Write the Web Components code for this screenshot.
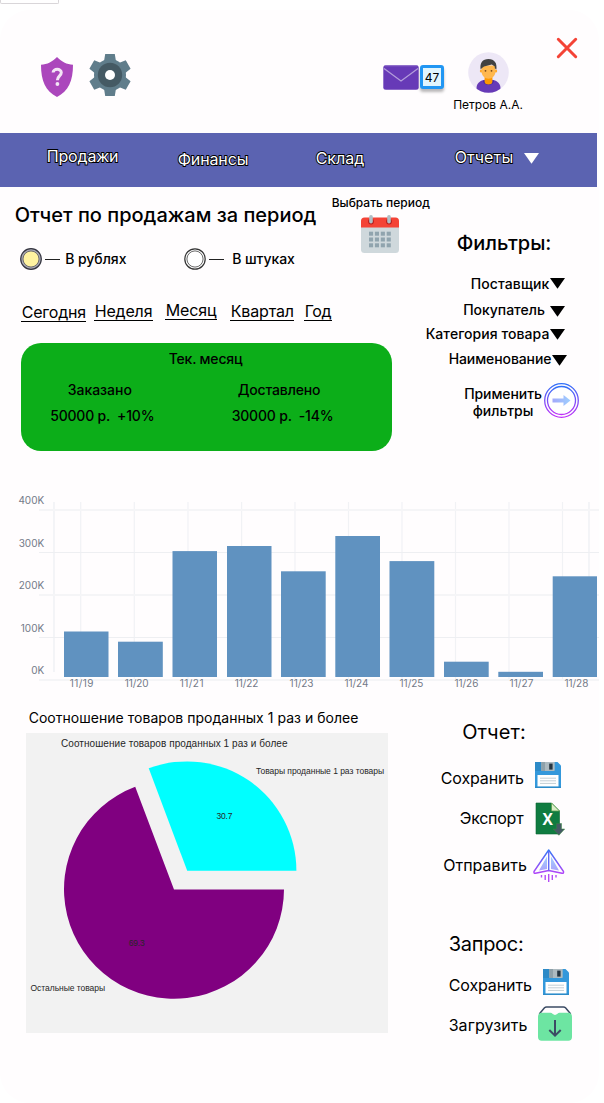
<!DOCTYPE html>
<html lang="ru">
<head>
<meta charset="utf-8">
<title>Отчет по продажам</title>
<style>
html,body{margin:0;padding:0;background:#fff;}
body{font-family:Inter,"Liberation Sans",sans-serif;color:#000;width:604px;height:1103px;overflow:hidden}
</style>
</head>
<body>
<report-app></report-app>
<script>
const define=(name,css,html)=>customElements.define(name,class extends HTMLElement{
  connectedCallback(){
    if(this.shadowRoot)return;
    const t=document.createElement('template');
    t.innerHTML=`<style>${css}</style>${html}`;
    this.attachShadow({mode:'open'}).appendChild(t.content.cloneNode(true));
  }
});

/* Single-line label, tracked so that it fills the width it is given */
customElements.define('ui-text',class extends HTMLElement{
  connectedCallback(){
    if(this.shadowRoot)return;
    const a=(k,d)=>this.getAttribute(k)||d;
    this.attachShadow({mode:'open'}).innerHTML=`<style>
      :host{display:block;flex:none;white-space:pre;box-sizing:content-box;
        font-size:${a('size',14)}px;font-weight:${a('weight',500)};line-height:${a('lh',20)}px;height:${a('lh',20)}px;
        margin-left:${a('x',0)}px;margin-top:${a('y',0)}px;padding-left:.7px;width:${a('w',50)-.7}px}
      :host([underline]){border-bottom:1px solid #000}
      :host([outlined]){color:#fff;-webkit-text-stroke:1.8px #000;paint-order:stroke fill}
    </style><span><slot></slot></span>`;
    const s=this.shadowRoot.querySelector('span');
    const n=this.textContent.length,w=s.getBoundingClientRect().width;
    s.style.letterSpacing=((a('w',50)-1.3-w)/n).toFixed(3)+'px';
  }
});

const floppy=`<path d="M0 0h22.5L26 3.5V26H0z" fill="#3498db"/><path d="M0 0h6v9H0z" fill="#2980b9" opacity=".6"/><path d="M6.3 0h13.4v8.2q0 .8-.8.8H7.1q-.8 0-.8-.8z" fill="#adbac0"/><path d="M6.3 0H10v9H7.1q-.8 0-.8-.8z" fill="#8fa1aa"/><rect x="14.2" y="1.6" width="3.4" height="6" fill="#263541"/><path d="M2.5 13h21v11.500h-21z" fill="#fff"/><path d="M5 16.2h16M5 18.8h16M5 21.4h16" stroke="#c3ced4" stroke-width="1"/><path d="M0 25.3h26" stroke="#2980b9" stroke-width="1.2" opacity=".6"/>`;
const tooth='M16.200 0h9.600l1.300 8H14.900zM16.200 42h9.600l1.300-8H14.900z';
const ICONS={
  shield:[32,40,`<path d="M16 0C12 4.500 6 7.500 0 7.800C0 24 4.500 34 16 40C27.500 34 32 24 32 7.800C26 7.500 20 4.500 16 0z" fill="#ab47bc"/><path d="M12.100 15.600C12.100 11.300 20.300 11.300 20.300 15.500C20.300 19 16.400 18.800 16.400 23.300" fill="none" stroke="#f3e5f5" stroke-width="3"/><circle cx="16.400" cy="27" r="1.900" fill="#f3e5f5"/>`],
  gear:[42,42,`<g fill="#607d8b"><circle cx="21" cy="21" r="16"/><path d="${tooth}"/><path d="${tooth}" transform="rotate(60 21 21)"/><path d="${tooth}" transform="rotate(120 21 21)"/></g><circle cx="21" cy="21" r="12.200" fill="#455a64"/><circle cx="21" cy="21" r="5" fill="#fff"/>`],
  mail:[36,25,`<rect x=".3" y=".3" width="35.400" height="24.400" rx="2.500" fill="#673ab7"/><path d="M1 3.500L18 16L35 3.500" fill="none" stroke="#b39ddb" stroke-width="1.300"/><path d="M1.500 .800h33" stroke="#9575cd" stroke-width=".8"/>`],
  avatar:[41,41,`<defs><clipPath id="c"><circle cx="20.500" cy="20.500" r="20.300"/></clipPath></defs><circle cx="20.500" cy="20.500" r="20.300" fill="#ede7f6"/><g clip-path="url(#c)"><path d="M8.500 42V36C8.500 30 14 27.500 20.500 27.500S32.500 30 32.500 36v6z" fill="#673ab7"/><path d="M15 28.500C15.500 34.500 25.500 34.500 26 28.500z" fill="#4527a0"/><path d="M16.600 24h7.800v5.500a3.900 3 0 0 1-7.800 0z" fill="#ff9800"/></g><circle cx="13.300" cy="19" r="1.500" fill="#ffa726"/><circle cx="27.700" cy="19" r="1.500" fill="#ffa726"/><path d="M13.600 13.500h13.800V19.500C27.400 29 13.600 29 13.600 19.500z" fill="#ffb74d"/><path d="M12.600 17.500C11.700 10.500 14.500 7.200 20.500 7C26.500 7.200 29.300 11 28.400 17.500L26.800 16.300V14.500L23.800 12.500L16 14.500L14 16z" fill="#424242"/><circle cx="17.500" cy="18.800" r=".9" fill="#784719"/><circle cx="23.500" cy="18.800" r=".9" fill="#784719"/>`],
  close:[20,20,`<path d="M1.300 1.300L18.700 18.700M18.700 1.300L1.300 18.700" stroke="#f44336" stroke-width="3" stroke-linecap="round"/>`],
  calendar:[38,38,`<path d="M0 10h38v24.500a3.500 3.500 0 0 1-3.500 3.500H3.500A3.500 3.500 0 0 1 0 34.500z" fill="#cfd8dc"/><path d="M0 12.500V6a3.500 3.500 0 0 1 3.500-3.500h31A3.500 3.500 0 0 1 38 6v6.500z" fill="#f44336"/><circle cx="10" cy="6.500" r="2.900" fill="#b71c1c"/><circle cx="28" cy="6.500" r="2.900" fill="#b71c1c"/><rect x="8.200" y="0" width="3.600" height="8.500" rx="1.800" fill="#b0bec5"/><rect x="26.200" y="0" width="3.600" height="8.500" rx="1.800" fill="#b0bec5"/><g fill="#90a4ae">${[16.7,22.5,28.3].map(y=>[8,13.9,19.8,25.7].map(x=>`<rect x="${x}" y="${y}" width="4.100" height="4"/>`).join('')).join('')}</g>`],
  down:[15,11,`<path d="M0 0h15L7.500 10.800z" fill="currentColor"/>`],
  on:[22,22,`<circle cx="11" cy="11" r="9.200" fill="#fff3a0" stroke="#a9a9b4" stroke-width="2.400"/><circle cx="11" cy="11" r="10.300" fill="none" stroke="#34343f" stroke-width="1.200"/><circle cx="11" cy="11" r="8" fill="none" stroke="#55555c" stroke-width=".8"/>`],
  off:[22,22,`<circle cx="11" cy="11" r="10.200" fill="#fff" stroke="#333" stroke-width="1.200"/><circle cx="11" cy="11" r="8.100" fill="none" stroke="#555" stroke-width=".9"/>`],
  apply:[35,35,`<defs><linearGradient id="g" x1="0" y1="0" x2="0" y2="1"><stop stop-color="#3070f8"/><stop offset="1" stop-color="#c030f8"/></linearGradient><linearGradient id="h"><stop stop-color="#a3a9fa"/><stop offset="1" stop-color="#9fd0ff"/></linearGradient></defs><circle cx="17.500" cy="17.500" r="16.800" fill="none" stroke="url(#g)" stroke-width="1.300"/><circle cx="17.500" cy="17.500" r="14" fill="#fff" stroke="url(#g)" stroke-width="1.300"/><path d="M8.500 15.500H19.500V12L26.500 17.500L19.500 23V19.500H8.500z" fill="url(#h)"/>`],
  save:[26,26,floppy],
  excel:[29,33,`<path d="M0 0h15.500L23.500 8V31H0z" fill="#107c41" stroke="#0b6633" stroke-width=".6"/><path d="M15.500 0L23.500 8h-8z" fill="#dcedc8" stroke="#5a9e4a" stroke-width=".8"/><text x="11.700" y="21.700" text-anchor="middle" font-family="Open Sans" font-weight="700" font-size="15.500" fill="#fff">X</text><path d="M20.300 20.500h5.200v5.500h3.200L22.900 32.300L17 26h3.300z" fill="#455a64" stroke="#37863c" stroke-width=".5"/>`],
  send:[32,33,`<defs><linearGradient id="g" x1="0" y1="0" x2="0" y2="1"><stop stop-color="#3478f6"/><stop offset="1" stop-color="#b044f8"/></linearGradient><linearGradient id="h" x1="0" y1="0" x2="0" y2="1"><stop stop-color="#9fd0ff"/><stop offset="1" stop-color="#aaa4fb"/></linearGradient></defs><path d="M14 7.500V20L6 21.500zM18 7.500L26 21.500L18 20z" fill="url(#h)"/><path d="M15.700 1L1 22.500Q.5 24.500 2.500 24.300L15.700 21.500L29 24.300Q31 24.500 30.500 22.500z" fill="none" stroke="url(#g)" stroke-width="1.400" stroke-linejoin="round"/><path d="M15.700 2V21.500" stroke="#5f6af7" stroke-width="1.400"/><path d="M8.500 26v2.500M12.200 26v5M15.700 25v8M19.300 26v5M23 26v2.500" stroke="#b44cf6" stroke-width="1.400"/>`],
  load:[34,35,`<path d="M1.300 8L6.500 1.700Q7.300 .9 8.500 .9h17q1.200 0 2 .8L32.700 8" fill="none" stroke="#3c4b64" stroke-width="1.500"/><path d="M0 11Q0 6.800 4 6.800h8.500q1.200 0 2 1q2.500 2.200 5 0q.8-1 2-1H30q4 0 4 4.200V31q0 3.700-3.700 3.700H3.700Q0 34.700 0 31z" fill="#6de5a2"/><path d="M17 14V29.500M11.300 24L17 29.700L22.700 24" fill="none" stroke="#3c4b64" stroke-width="2"/>`]
};
customElements.define('ui-icon',class extends HTMLElement{
  connectedCallback(){
    if(this.shadowRoot)return;
    const [w,h,body]=ICONS[this.getAttribute('name')];
    this.attachShadow({mode:'open'}).innerHTML=`<style>:host{display:block;flex:none;width:${w}px;height:${h}px;margin-left:${this.getAttribute('x')||0}px;margin-top:${this.getAttribute('y')||0}px}svg{display:block;overflow:visible}</style><svg width="${w}" height="${h}" viewBox="0 0 ${w} ${h}">${body}</svg>`;
  }
});

define('app-header',`
  :host{display:flex;align-items:flex-start;height:123px}
  .badge{box-sizing:border-box;width:24px;height:24px;margin:55px 0 0 1px;border:3px solid #2196f3;border-radius:3px;background:#e1f5fe;box-shadow:0 3px 3px rgba(0,0,0,.28);display:flex;justify-content:center;align-items:center}
  .user{width:72px;margin:42px 0 0 8px;display:flex;flex-direction:column}`,
  `<ui-icon name="shield" x="41" y="47"></ui-icon>
   <ui-icon name="gear" x="16" y="44"></ui-icon>
   <ui-icon name="mail" x="252" y="54.500"></ui-icon>
   <div class="badge"><ui-text size="12" weight="400" w="16" lh="17">47</ui-text></div>
   <div class="user"><ui-icon name="avatar" x="15.500"></ui-icon><ui-text size="12" weight="400" w="71" x=".5" y="2">Петров А.А.</ui-text></div>
   <ui-icon name="close" x="32.500" y="28"></ui-icon>`);

define('app-nav',`
  :host{display:flex;align-items:flex-start;width:597px;height:54px;background:#5b63b1;color:#fff}`,
  `<ui-text outlined size="16" weight="400" w="73" x="46" y="13">Продажи</ui-text>
   <ui-text outlined size="16" weight="400" w="72" x="58" y="16">Финансы</ui-text>
   <ui-text outlined size="16" weight="400" w="50" x="66" y="15">Склад</ui-text>
   <ui-text outlined size="16" weight="400" w="60" x="89" y="14">Отчеты</ui-text>
   <ui-icon name="down" x="10" y="19.500"></ui-icon>`);

define('report-period',`
  :host{display:block;width:425px}
  .row{display:flex;align-items:flex-start}
  .title{height:61px;width:436px}
  .date{display:flex;flex-direction:column;margin-left:14px}
  .units{height:52px}
  .dash{width:15px;height:1px;background:#222;margin:11px 0 0 3px}
  .periods{height:43px}`,
  `<div class="row title"><ui-text size="20" w="303" x="14" y="18">Отчет по продажам за период</ui-text>
     <div class="date"><ui-text size="12" w="99.500" y="6">Выбрать период</ui-text><ui-icon name="calendar" x="30" y="2"></ui-icon></div></div>
   <div class="row units"><ui-icon name="on" x="20"></ui-icon><span class="dash"></span><ui-text w="62.500" x="4.500" y="1">В рублях</ui-text>
     <ui-icon name="off" x="57"></ui-icon><span class="dash"></span><ui-text w="64" x="7.500" y="1">В штуках</ui-text></div>
   <div class="row periods">
     <ui-text underline size="16" weight="400" lh="18" w="65.500" x="21" y="3">Сегодня</ui-text>
     <ui-text underline size="16" weight="400" lh="18" w="59" x="7.500" y="2">Неделя</ui-text>
     <ui-text underline size="16" weight="400" lh="18" w="52" x="12" y="1">Месяц</ui-text>
     <ui-text underline size="16" weight="400" lh="18" w="64.500" x="13" y="2">Квартал</ui-text>
     <ui-text underline size="16" weight="400" lh="18" w="28" x="9.500" y="2">Год</ui-text></div>
   <summary-card></summary-card>`);

define('summary-card',`
  :host{display:block;width:371px;height:108px;margin-left:21px;border-radius:20px;background:#0cae19}
  .row{display:flex;align-items:flex-start}`,
  `<div class="row"><ui-text w="75" x="147" y="6">Тек. месяц</ui-text></div>
   <div class="row"><ui-text w="65.500" x="46" y="11">Заказано</ui-text><ui-text w="84" x="104.500" y="11">Доставлено</ui-text></div>
   <div class="row"><ui-text w="105.500" x="28.500" y="6">50000 р.  +10%</ui-text><ui-text w="103" x="76" y="6">30000 р.  -14%</ui-text></div>`);

define('filter-panel',`
  :host{display:block;width:172px}
  .row{display:flex;align-items:flex-start;height:20px}`,
  `<ui-text size="20" w="96" x="31" y="46">Фильтры:</ui-text>
   <div class="row" style="margin-top:21px"><ui-text w="80" x="45">Поставщик</ui-text><ui-icon name="down" x=".5" y="4"></ui-icon></div>
   <div class="row" style="margin-top:6px"><ui-text w="83" x="37.500">Покупатель</ui-text><ui-icon name="down" x="5" y="6"></ui-icon></div>
   <div class="row" style="margin-top:4px"><ui-text w="125" x="0">Категория товара</ui-text><ui-icon name="down" x=".5" y="5"></ui-icon></div>
   <div class="row" style="margin-top:5px"><ui-text w="104" x="23">Наименование</ui-text><ui-icon name="down" x=".5" y="6"></ui-icon></div>
   <div class="row" style="margin-top:16px"><div><ui-text w="79" x="38.500" lh="17">Применить</ui-text><ui-text w="62" x="47" lh="17">фильтры</ui-text></div><ui-icon name="apply" x="1.500" y="-2"></ui-icon></div>`);

customElements.define('bar-chart',class extends HTMLElement{
  connectedCallback(){
    const bars=[[64,141.5,44.5],[118,151.7,44.8],[172.5,61.1,44.5],[227,56,44.5],[281,81.3,44.7],[335.3,46,44.7],[389.5,71.1,44.8],[444,171.7,44.7],[498.3,181.8,44.7],[552.7,86.3,44.3]];
    let s='';
    [[54,2],[80.7,1],[134.3,1],[188,1],[241.6,1],[295,1],[348.5,1],[402,1],[455.5,1],[509,1],[562.5,1],[589,2]].forEach(([x,w])=>s+=`<path d="M${x} 12V${w>1?182:189}" stroke="#f1f2f5" stroke-width="${w*.4+.8}"/>`);
    [20,62.5,105,147.5,190].forEach((y,i)=>s+=`<path d="M39 ${y}H599" stroke="${i%2?'#eeeff2':'#f5f5f7'}" stroke-width="${i%2?1:2}"/>`);
    bars.forEach(([x,y,w])=>s+=`<rect x="${x}" y="${y}" width="${w}" height="${187-y}" fill="#6092c0"/>`);
    ['400K','300K','200K','100K','0K'].forEach((t,i)=>s+=`<text x="44.200" y="${14.2+i*42.5}" text-anchor="end">${t}</text>`);
    for(let i=0;i<10;i++)s+=`<text x="${81.6+i*54.98}" y="197.300" text-anchor="middle" textLength="23.800">11/${19+i}</text>`;
    this.attachShadow({mode:'open'}).innerHTML=`<style>:host{display:block;height:210px}svg{display:block}text{font:400 10px Inter,sans-serif;fill:#737a88}</style><svg width="604" height="210">${s}</svg>`;
  }
});

define('pie-panel',`
  :host{display:block;width:425px}
  svg{display:block;margin:5px 0 0 26px;background:#f2f2f2}
  text{font:8.500px "Liberation Sans",Arial,sans-serif;fill:#262626}`,
  `<ui-text weight="400" w="331" x="28" y="8">Соотношение товаров проданных 1 раз и более</ui-text>
   <svg width="362" height="300" viewBox="26 733 362 300">
    <path d="M174 889.600H284A110 109.500 0 1 1 135.200 786.800z" fill="#800080"/>
    <path d="M187.200 870.700H296.400A109.400 109.400 0 0 0 148.700 768.300z" fill="#0ff"/>
    <text x="61" y="746.700" style="font-size:10px" textLength="226.500">Соотношение товаров проданных 1 раз и более</text>
    <text x="256" y="774" textLength="128">Товары проданные 1 раз товары</text>
    <text x="216.500" y="819" textLength="16">30.7</text>
    <text x="128.700" y="945.800" textLength="16">69.3</text>
    <text x="30.500" y="991.200" textLength="74.500">Остальные товары</text>
   </svg>`);

define('action-panel',`
  :host{display:block;width:172px}
  .row{display:flex;align-items:flex-start}`,
  `<ui-text size="20" weight="400" w="65" x="36.500" y="22">Отчет:</ui-text>
   <div class="row" style="height:41px;margin-top:20px"><ui-text size="16" weight="400" w="84.500" x="15" y="6">Сохранить</ui-text><ui-icon name="save" x="10.500"></ui-icon></div>
   <div class="row" style="height:46px"><ui-text size="16" weight="400" w="65" x="34" y="5">Экспорт</ui-text><ui-icon name="excel" x="12.300"></ui-icon></div>
   <div class="row" style="height:85px"><ui-text size="16" weight="400" w="85" x="17.500" y="6">Отправить</ui-text><ui-icon name="send" x="5.200"></ui-icon></div>
   <ui-text size="20" weight="400" w="76" x="23">Запрос:</ui-text>
   <div class="row" style="height:37px;margin-top:15px"><ui-text size="16" weight="400" w="84.500" x="23" y="6">Сохранить</ui-text><ui-icon name="save" x="10.500"></ui-icon></div>
   <div class="row"><ui-text size="16" weight="400" w="80" x="23" y="9">Загрузить</ui-text><ui-icon name="load" x="10.300"></ui-icon></div>`);

define('report-app',`
  :host{display:block;width:604px}
  .tab{box-sizing:border-box;width:59px;height:4px;border:1px solid #d9d6d9;border-top:0;border-radius:0 0 2px 2px;background:#fff}
  .window{box-sizing:border-box;width:599px;height:1093px;margin-top:6px;border-radius:30px;background:#fffdfe}
  .row{display:flex;align-items:flex-start}
  .top{height:303px}`,
  `<div class="tab"></div>
   <div class="window"><app-header></app-header><app-nav></app-nav>
    <div class="row top"><report-period></report-period><filter-panel></filter-panel></div>
    <bar-chart></bar-chart>
    <div class="row"><pie-panel></pie-panel><action-panel></action-panel></div>
   </div>`);
</script>
</body>
</html>
